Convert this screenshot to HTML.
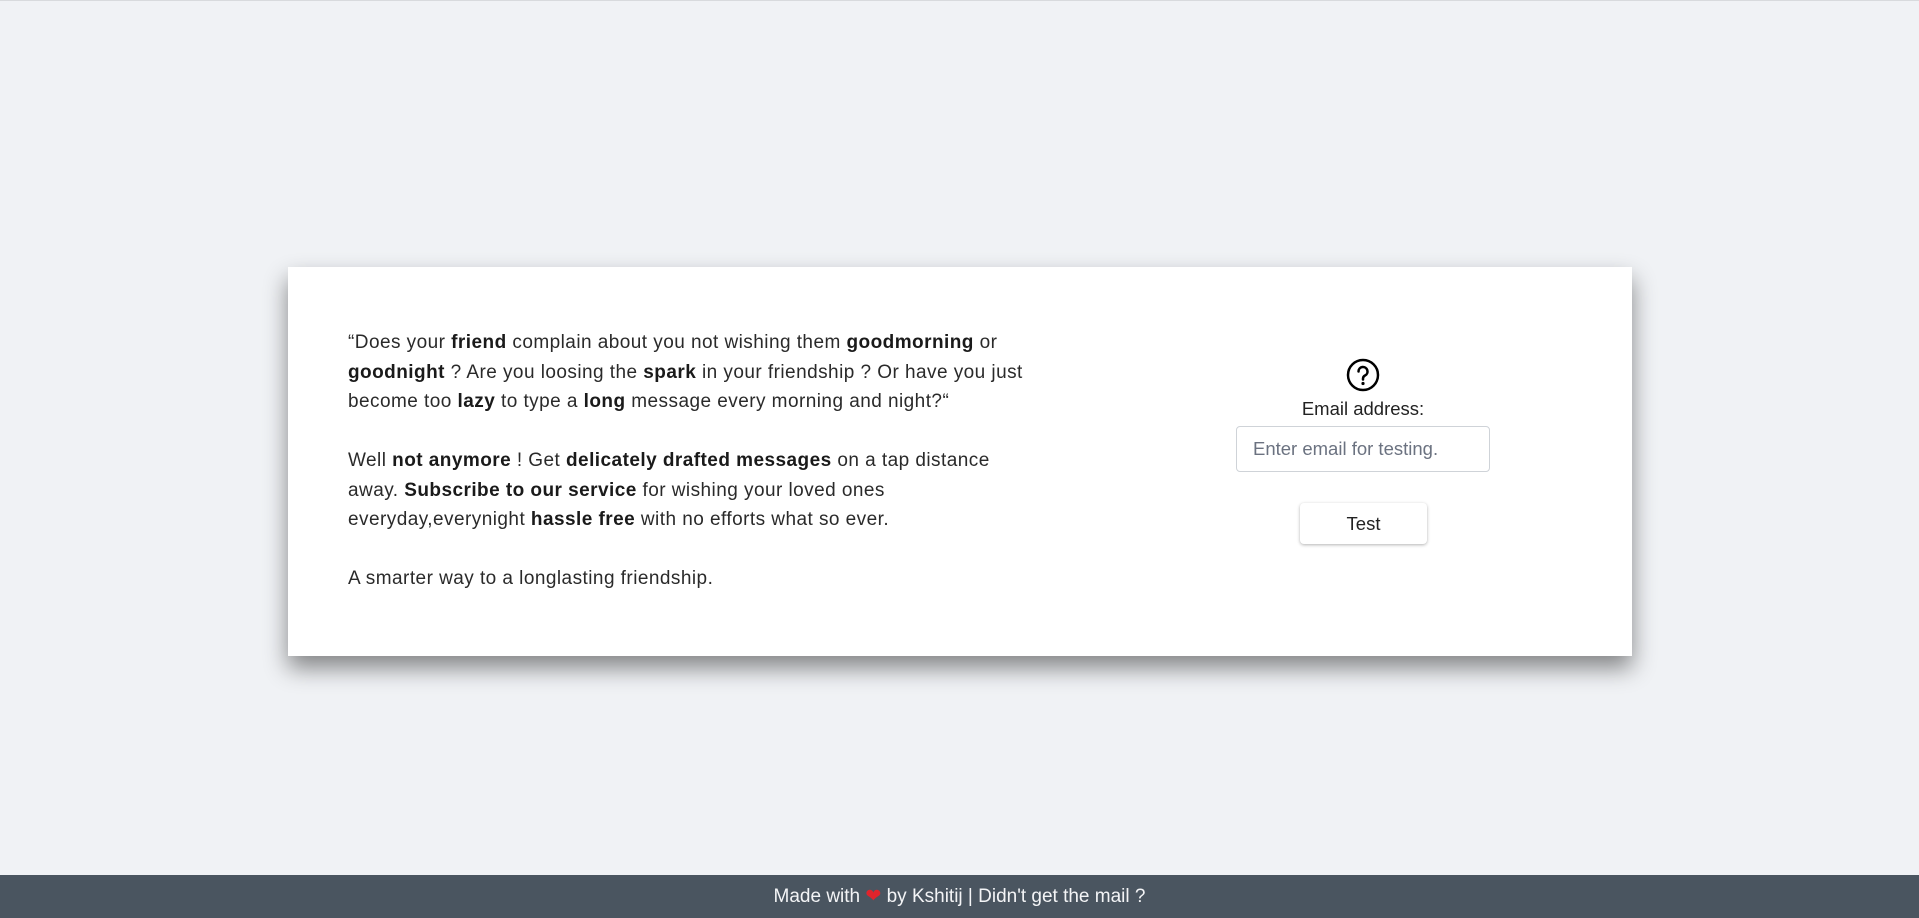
<!DOCTYPE html>
<html><head><meta charset="utf-8"><style>
*{box-sizing:border-box;margin:0;padding:0}
body{width:1919px;height:917px;background:#f0f2f5;font-family:"Liberation Sans",sans-serif;color:#222;position:relative;overflow:hidden;border-top:1px solid #d8dadd}
.card{position:absolute;left:288px;top:266px;width:1344px;height:389px;background:#fff;box-shadow:0 12px 22px rgba(0,0,0,.45)}
.txt{position:absolute;left:60px;top:61px;width:800px;white-space:nowrap;font-size:19px;letter-spacing:0.45px;line-height:29.5px;color:#2a2a2a}
.txt p{margin-bottom:29.5px}
b{color:#1a1a1a}
.icon{position:absolute;left:1058px;top:91px}
.lbl{position:absolute;left:975px;width:200px;text-align:center;top:131px;font-size:18.5px;color:#222}
.inp{position:absolute;left:948px;top:159px;width:254px;height:46px;border:1px solid #cfd3d8;border-radius:4px;padding-left:16px;line-height:44px;font-size:18.5px;color:#6b7280}
.btn{position:absolute;left:1012px;top:236px;width:127px;height:41px;border-radius:4px;box-shadow:0 1px 3px rgba(0,0,0,.3);text-align:center;line-height:41px;font-size:18.5px;color:#222}
.foot{position:absolute;left:0;top:874px;width:1919px;height:43px;background:#4a5560;color:#f3f4f6;text-align:center;font-size:19px;line-height:43px}
</style></head><body>
<div class="card">
<div class="txt">
<p>“Does your <b>friend</b> complain about you not wishing them <b>goodmorning</b> or<br><b>goodnight</b> ? Are you loosing the <b>spark</b> in your friendship ? Or have you just<br>become too <b>lazy</b> to type a <b>long</b> message every morning and night?“</p>
<p>Well <b>not anymore</b> ! Get <b>delicately drafted messages</b> on a tap distance<br>away. <b>Subscribe to our service</b> for wishing your loved ones<br>everyday,everynight <b>hassle free</b> with no efforts what so ever.</p>
<p>A smarter way to a longlasting friendship.</p>
</div>
<svg class="icon" width="34" height="34" viewBox="0 0 34 34"><circle cx="17" cy="17" r="15" fill="none" stroke="#000" stroke-width="2.5"/><path d="M12.5 13.5a4.5 4.5 0 1 1 6.5 4c-1.3.7-2 1.5-2 3v1" fill="none" stroke="#000" stroke-width="2.5" stroke-linecap="round"/><circle cx="17" cy="25.5" r="1.6" fill="#000"/></svg>
<div class="lbl">Email address:</div>
<div class="inp">Enter email for testing.</div>
<div class="btn">Test</div>
</div>
<div class="foot">Made with <span style="color:#e0242c">❤</span> by Kshitij | Didn't get the mail ?</div>
</body></html>
